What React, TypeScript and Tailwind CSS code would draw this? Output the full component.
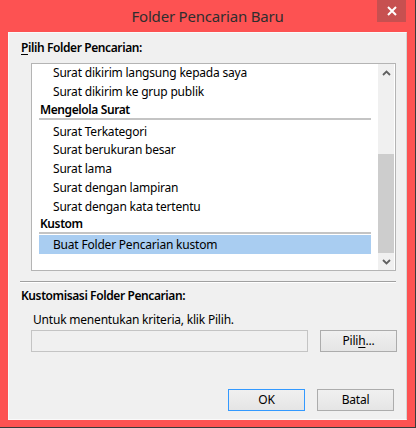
import React from 'react';

const font = { fontFamily: '"Noto Sans", "Open Sans", sans-serif' };

function Chevron({ down }: { down?: boolean }) {
    return (
        <svg width="9" height="6" viewBox="0 0 9 6" className={down ? 'rotate-180' : ''}>
            <path d="M1 5 L4.5 1.5 L8 5" fill="none" stroke="#606060" strokeWidth="1.8" />
        </svg>
    );
}

function Item({ label }: { label: string }) {
    return (
        <div className="h-[18.75px] leading-[18.75px] pl-[21px] text-[12px] tracking-[-0.2px] text-black whitespace-nowrap">
            {label}
        </div>
    );
}

function Header({ label }: { label: string }) {
    return (
        <>
            <div className="h-[16px] leading-[16px] pl-[8px] text-[12px] font-semibold tracking-[-0.4px] text-black">{label}</div>
            <div className="mx-[7px] h-[2px] bg-[#c4c4c4]" />
        </>
    );
}

function Button({ children, focused }: { children: React.ReactNode; focused?: boolean }) {
    return (
        <button
            className={`w-[77px] h-[22px] text-[12px] tracking-[-0.2px] text-black border bg-gradient-to-b from-[#f0f0f0] to-[#e5e5e5] ${
                focused ? 'border-[#3399ff]' : 'border-[#acacac]'
            }`}
        >
            {children}
        </button>
    );
}

export default function App() {
    return (
        <div style={font} className="w-[416px] h-[428px] bg-[#fd5252] border-r border-b border-[#3a3a3a] flex flex-col">
            {/* Title bar */}
            <div className="relative h-[32px] flex items-center justify-center">
                <span className="text-[15px] tracking-[-0.2px] text-[#2e2e2e] pt-[1px]">Folder Pencarian Baru</span>
                <div className="absolute top-0 right-[9px] w-[29px] h-[22px] bg-[#c75050] flex items-center justify-center">
                    <svg width="10" height="10" viewBox="0 0 10 10">
                        <path d="M1 1 L9 9 M9 1 L1 9" stroke="white" strokeWidth="2" />
                    </svg>
                </div>
            </div>

            {/* Body */}
            <div className="mx-[8px] mb-[7px] flex-1 bg-[#f0f0f0] border border-t-[#fafafa] border-l-[#fafafa] border-r-[#d4d4d4] border-b-[#fafafa] flex flex-col">
                <div className="ml-[12px] mt-[7px] h-[16px] leading-[16px] text-[12px] font-semibold tracking-[-0.4px] text-black">
                    <span className="underline underline-offset-2">P</span>ilih Folder Pencarian:
                </div>

                {/* List box */}
                <div className="ml-[22px] mt-[7px] w-[365px] h-[208px] bg-white border border-[#b4b4b4] flex">
                    <div className="flex-1 flex flex-col overflow-hidden">
                        <Item label="Surat dikirim langsung kepada saya" />
                        <Item label="Surat dikirim ke grup publik" />
                        <Header label="Mengelola Surat" />
                        <div className="h-[3px]" />
                        <Item label="Surat Terkategori" />
                        <Item label="Surat berukuran besar" />
                        <Item label="Surat lama" />
                        <Item label="Surat dengan lampiran" />
                        <Item label="Surat dengan kata tertentu" />
                        <Header label="Kustom" />
                        <div className="mx-[7px] mt-[1px] h-[19px] leading-[19px] pl-[14px] bg-[#a9cdf1] text-[12px] tracking-[-0.2px] text-black">
                            Buat Folder Pencarian kustom
                        </div>
                    </div>
                    {/* Scrollbar */}
                    <div className="w-[16px] mr-[1px] bg-[#f0f0f0] flex flex-col">
                        <div className="h-[17px] flex items-center justify-center">
                            <Chevron />
                        </div>
                        <div className="flex-1" />
                        <div className="h-[99px] bg-[#cdcdcd]" />
                        <div className="h-[17px] flex items-center justify-center">
                            <Chevron down />
                        </div>
                    </div>
                </div>

                <div className="ml-[11px] mt-[10px] w-[376px] h-[2px] border-t border-[#a0a0a0] border-b border-b-white" />

                <div className="ml-[12px] mt-[5px] h-[16px] leading-[16px] text-[12px] font-semibold tracking-[-0.4px] text-black">
                    Kustomisasi Folder Pencarian:
                </div>
                <div className="ml-[24px] mt-[8px] h-[16px] leading-[16px] text-[12px] tracking-[-0.2px] text-black">
                    Untuk menentukan kriteria, klik Pilih.
                </div>
                <div className="ml-[22px] mt-[2px] flex gap-[12px]">
                    <div className="w-[277px] h-[22px] border border-[#c4c4c4] bg-[#f0f0f0]" />
                    <Button>
                        Pili<span className="underline underline-offset-2">h</span>...
                    </Button>
                </div>

                <div className="mt-[37px] mr-[12px] flex justify-end gap-[12px]">
                    <Button focused>OK</Button>
                    <Button>Batal</Button>
                </div>
            </div>
        </div>
    );
}
